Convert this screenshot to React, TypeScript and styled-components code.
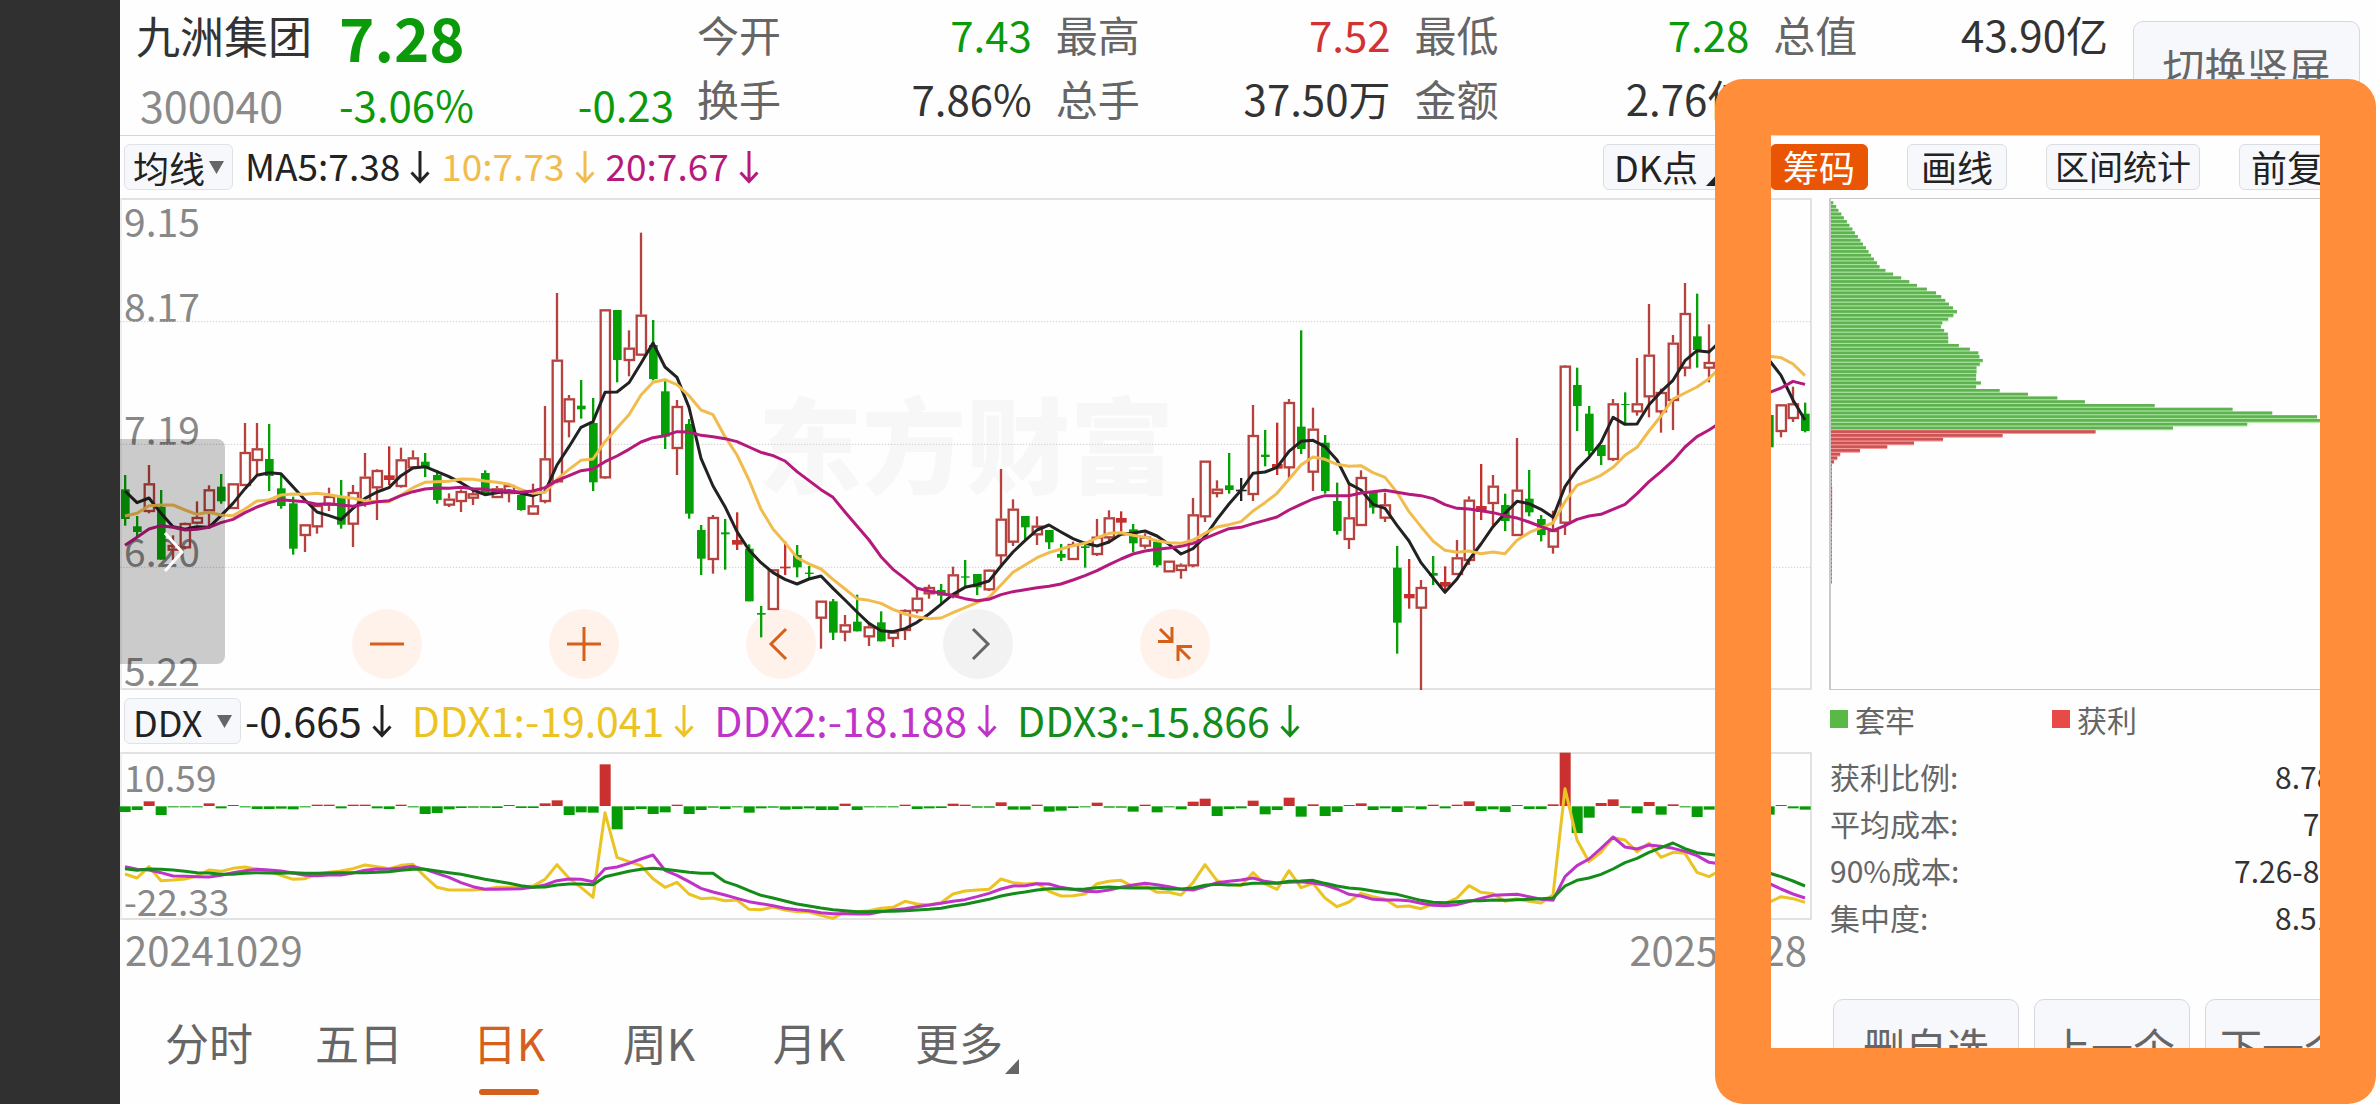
import React from 'react';
import styled, { createGlobalStyle } from 'styled-components';

const GlobalStyle = createGlobalStyle`
  *, *::before, *::after { box-sizing: border-box; }
  body {
    margin: 0;
    background: #fefefe;
    font-family: "Noto Sans CJK SC", "Noto Sans", sans-serif;
    color: #333;
  }
  button, select {
    font-family: inherit;
    color: inherit;
    margin: 0;
    padding: 0;
    border: 0;
    background: none;
    cursor: pointer;
  }
  dl, dd, dt, h1, p { margin: 0; font-weight: 400; }
`;

const GREEN = '#0a9a0a';
const RED = '#d23232';
const INK = '#222';
const GOLD = '#f1bc4e';
const PLUM = '#b5197c';
const DDX_GOLD = '#ebc323';
const DDX_PURPLE = '#bf33c8';
const DDX_GREEN = '#148c1a';
const ORANGE = '#d4601c';

/* ---------- data ---------- */

type Kind = 'g' | 'r' | 'R' | 'k';
type Candle = [Kind, number, number, number, number];

// kind, high, low, body top, body bottom
const candles: Candle[] = [
  ['g', 855, 1007, 898, 987], ['g', 978, 1040, 1009, 1026], ['r', 825, 970, 880, 964], ['g', 900, 1109, 950, 1109],
  ['r', 1036, 1110, 1065, 1080], ['r', 998, 1078, 999, 1073], ['r', 934, 1003, 981, 999], ['r', 886, 1010, 898, 962],
  ['g', 852, 941, 890, 934], ['r', 880, 955, 880, 955], ['r', 699, 888, 786, 886], ['r', 699, 853, 775, 811],
  ['g', 702, 903, 807, 858], ['g', 855, 956, 895, 948], ['g', 920, 1094, 940, 1076], ['r', 1003, 1086, 1003, 1036],
  ['r', 940, 1031, 945, 1010], ['r', 893, 963, 918, 945], ['g', 870, 1016, 918, 1004], ['r', 885, 1071, 906, 1002],
  ['r', 789, 950, 860, 940], ['r', 838, 990, 840, 893], ['R', 769, 885, 856, 870], ['r', 773, 893, 808, 889],
  ['r', 781, 833, 802, 833], ['g', 789, 861, 815, 832], ['g', 841, 941, 855, 930], ['r', 910, 951, 926, 945],
  ['r', 898, 966, 903, 934], ['r', 902, 945, 910, 924], ['g', 841, 913, 849, 910], ['r', 888, 924, 895, 922],
  ['r', 880, 937, 885, 910], ['g', 912, 962, 915, 960], ['r', 881, 974, 946, 972], ['r', 648, 940, 805, 934],
  ['r', 309, 880, 509, 875], ['r', 615, 742, 625, 695], ['g', 570, 686, 647, 658], ['g', 624, 903, 699, 877],
  ['r', 358, 866, 358, 863], ['g', 360, 577, 360, 510], ['r', 421, 559, 473, 511], ['r', 128, 497, 374, 495],
  ['g', 390, 571, 465, 567], ['g', 570, 777, 604, 740], ['r', 630, 855, 648, 775], ['g', 687, 986, 702, 971],
  ['g', 1005, 1155, 1020, 1106], ['r', 975, 1151, 981, 1108], ['g', 987, 1139, 1027, 1033], ['R', 967, 1080, 1050, 1064],
  ['g', 1063, 1234, 1076, 1234], ['g', 1248, 1342, 1269, 1274], ['r', 1138, 1258, 1138, 1258], ['R', 1054, 1155, 1130, 1135],
  ['g', 1065, 1162, 1095, 1132], ['g', 1128, 1165, 1148, 1152], ['r', 1232, 1376, 1232, 1284], ['g', 1227, 1350, 1234, 1328],
  ['r', 1275, 1354, 1303, 1326], ['g', 1214, 1324, 1295, 1324], ['r', 1300, 1368, 1309, 1340], ['g', 1264, 1354, 1297, 1354],
  ['r', 1320, 1371, 1325, 1345], ['r', 1258, 1350, 1260, 1321], ['r', 1196, 1270, 1223, 1262], ['r', 1184, 1226, 1191, 1211],
  ['g', 1182, 1240, 1200, 1217], ['r', 1130, 1225, 1153, 1215], ['g', 1110, 1190, 1159, 1163], ['g', 1152, 1215, 1152, 1192],
  ['r', 1138, 1203, 1139, 1199], ['r', 837, 1130, 986, 1097], ['r', 928, 1068, 956, 1056], ['g', 978, 1048, 978, 1012],
  ['r', 979, 1065, 1007, 1034], ['g', 1020, 1077, 1020, 1057], ['g', 1062, 1113, 1092, 1103], ['r', 1055, 1110, 1062, 1108],
  ['g', 1055, 1133, 1069, 1074], ['r', 987, 1098, 1040, 1093], ['r', 961, 1060, 982, 1043], ['R', 964, 1025, 984, 998],
  ['g', 1002, 1087, 1018, 1060], ['r', 1030, 1076, 1040, 1068], ['g', 1050, 1132, 1055, 1126], ['r', 1112, 1145, 1112, 1145],
  ['r', 1120, 1166, 1124, 1141], ['r', 924, 1132, 973, 1127], ['r', 812, 996, 812, 980], ['r', 871, 922, 896, 910],
  ['g', 789, 911, 886, 900], ['k', 864, 933, 899, 904], ['r', 645, 933, 735, 913], ['g', 720, 829, 794, 801],
  ['R', 698, 855, 822, 836], ['r', 627, 869, 636, 833], ['g', 421, 792, 710, 777], ['r', 653, 903, 716, 846],
  ['g', 735, 911, 758, 903], ['g', 878, 1034, 933, 1023], ['r', 880, 1077, 982, 1048], ['r', 841, 1006, 861, 1006],
  ['g', 905, 971, 905, 953], ['r', 908, 996, 943, 984], ['g', 1068, 1391, 1133, 1298], ['R', 1107, 1256, 1212, 1225],
  ['r', 1170, 1500, 1191, 1254], ['g', 1098, 1185, 1149, 1157], ['R', 1129, 1205, 1176, 1190], ['r', 1050, 1154, 1102, 1153],
  ['r', 919, 1125, 929, 1111], ['R', 822, 990, 948, 966], ['r', 855, 1006, 887, 940], ['g', 911, 1023, 945, 993],
  ['r', 744, 1037, 899, 1036], ['g', 840, 979, 926, 967], ['g', 975, 1054, 987, 1035], ['r', 962, 1091, 1020, 1071],
  ['r', 525, 1035, 527, 999], ['g', 533, 723, 585, 648], ['g', 648, 797, 671, 783], ['g', 765, 825, 765, 798],
  ['r', 627, 813, 640, 808], ['g', 607, 703, 642, 645], ['r', 504, 677, 640, 665], ['r', 342, 682, 494, 620],
  ['r', 596, 728, 606, 665], ['r', 435, 720, 458, 631], ['r', 279, 559, 369, 534], ['g', 311, 533, 439, 480],
  ['r', 403, 577, 516, 534], ['r', 380, 560, 420, 520], ['g', 400, 590, 450, 560], ['r', 420, 620, 470, 570],
  ['g', 520, 700, 560, 660], ['g', 640, 780, 675, 772], ['r', 643, 742, 643, 724], ['r', 590, 696, 640, 685],
  ['g', 638, 727, 671, 723],
];

const ma5 = [
  903, 938, 924, 970, 1010, 1018, 1010, 1012, 977, 940, 896, 856, 848, 851, 890, 930, 966, 977, 989, 955,
  925, 906, 893, 857, 834, 830, 845, 860, 878, 900, 914, 908, 902, 910, 917, 905, 825, 770, 712, 695,
  607, 606, 578, 520, 459, 531, 562, 652, 805, 888, 950, 1025, 1080, 1118, 1148, 1168, 1182, 1167, 1158, 1195,
  1230, 1266, 1300, 1322, 1325, 1316, 1297, 1272, 1243, 1213, 1192, 1184, 1173, 1128, 1086, 1052, 1020, 1005, 1026, 1046,
  1060, 1068, 1056, 1033, 1029, 1023, 1038, 1063, 1092, 1076, 1040, 988, 942, 901, 850, 846, 832, 784, 754, 751,
  770, 810, 881, 900, 943, 955, 1006, 1053, 1118, 1163, 1207, 1167, 1110, 1062, 1010, 970, 934, 941, 958, 982,
  890, 838, 802, 757, 682, 703, 702, 644, 605, 571, 512, 482, 486, 452, 450, 455, 480, 510, 556, 630, 690,
];

const ma10 = [
  978, 970, 947, 945, 945, 960, 973, 967, 975, 977, 957, 933, 930, 915, 912, 913, 910, 914, 920, 925,
  932, 935, 935, 915, 893, 877, 875, 874, 867, 868, 873, 877, 883, 898, 910, 907, 868, 838, 811, 807,
  755, 714, 674, 615, 577, 569, 584, 617, 660, 674, 740, 795, 870, 958, 1017, 1058, 1103, 1122, 1137, 1168,
  1197, 1226, 1231, 1240, 1258, 1272, 1280, 1286, 1284, 1268, 1253, 1238, 1222, 1185, 1147, 1125, 1103, 1088, 1077, 1067,
  1060, 1044, 1030, 1028, 1036, 1042, 1052, 1058, 1060, 1050, 1030, 1011, 1004, 995, 963, 938, 910, 868, 825, 801,
  808, 823, 829, 827, 848, 862, 907, 965, 1010, 1053, 1081, 1087, 1083, 1091, 1086, 1091, 1051, 1028, 1013, 999,
  935, 886, 872, 856, 832, 796, 772, 723, 678, 627, 609, 591, 566, 530, 515, 507, 500, 499, 503, 522, 557,
];

const ma20 = [
  1066, 1042, 1017, 1007, 1012, 1020, 1018, 1012, 998, 988, 968, 951, 938, 929, 932, 935, 943, 941, 945, 949,
  942, 935, 932, 917, 905, 897, 894, 895, 892, 896, 898, 904, 903, 907, 903, 893, 872, 857, 842, 837,
  815, 798, 778, 756, 743, 737, 725, 726, 736, 740, 746, 755, 771, 787, 797, 813, 845, 872, 899, 922,
  966, 1008, 1050, 1100, 1138, 1166, 1195, 1203, 1210, 1217, 1226, 1232, 1228, 1214, 1205, 1199, 1193, 1189, 1182, 1170,
  1157, 1142, 1124, 1107, 1092, 1083, 1078, 1074, 1069, 1060, 1045, 1030, 1016, 1012, 1001, 991, 981, 960, 943, 927,
  917, 917, 917, 909, 905, 901, 907, 913, 917, 926, 944, 955, 957, 962, 968, 977, 984, 996, 1010, 1022,
  1007, 988, 978, 973, 958, 943, 911, 875, 845, 812, 771, 740, 720, 697, 670, 650, 630, 608, 594, 574, 583,
];

const ddxBars = [
  -17, -11, 14, -26, -3, -3, -3, 8, -6, 3, -3, -8, -8, -7, -9, -3, 4, 4, -6, 4,
  4, -6, -8, 4, -3, -23, -20, -9, -5, -4, -4, -5, 3, -5, -5, 8, 17, -26, -18, -19,
  125, -69, -11, -8, -23, -18, 4, -23, -11, -4, -8, -3, -19, -6, -4, -10, -8, -6, -11, -11,
  7, -11, -3, -3, -3, 4, -8, -6, -5, 7, 4, -4, -4, 11, -10, -10, 4, -16, -13, -5,
  -3, 10, -4, -4, -16, 4, -18, -3, -9, 13, 22, -29, -8, -6, 16, -24, -11, 25, -31, 5,
  -29, -17, 3, 8, -11, -6, -17, -4, -9, 4, -6, 4, 14, -14, -9, -17, 3, -8, -8, 5,
  160, -80, -34, 9, 20, -4, -21, 12, -25, 5, -3, -32, -10, -8, 6, -12, -9, -25, 3, -6, -10,
];

const ddx1 = [
  552, 564, 530, 572, 570, 567, 558, 540, 544, 535, 531, 538, 543, 556, 568, 566, 553, 547, 543, 536,
  525, 530, 536, 526, 523, 560, 592, 600, 600, 600, 598, 592, 592, 592, 588, 568, 524, 565, 592, 622,
  368, 502, 515, 527, 566, 592, 577, 612, 626, 624, 632, 630, 658, 659, 651, 660, 665, 666, 676, 685,
  665, 665, 662, 655, 652, 634, 642, 645, 638, 612, 603, 600, 598, 567, 578, 582, 580, 604, 618, 617,
  612, 581, 574, 571, 590, 586, 607, 607, 615, 578, 524, 572, 583, 587, 548, 582, 598, 542, 593, 580,
  624, 650, 636, 610, 620, 628, 650, 648, 656, 642, 640, 624, 587, 607, 611, 634, 626, 634, 639, 615,
  296, 450, 515, 487, 443, 450, 485, 460, 502, 487, 490, 547, 560, 540, 560, 560, 600, 637, 620, 626, 637,
];

const ddx2 = [
  530, 538, 540, 548, 558, 559, 560, 561, 556, 548, 542, 538, 540, 543, 549, 556, 557, 555, 555, 549,
  541, 537, 538, 534, 529, 538, 550, 562, 578, 590, 598, 598, 597, 596, 592, 585, 572, 567, 568, 575,
  536, 531, 520, 507, 495, 541, 556, 575, 595, 606, 615, 625, 635, 641, 647, 655, 659, 662, 668, 671,
  671, 672, 672, 665, 660, 656, 650, 645, 640, 634, 629, 620, 610, 597, 588, 587, 581, 582, 592, 598,
  604, 605, 600, 592, 585, 580, 584, 590, 598, 600, 590, 578, 574, 570, 564, 574, 579, 577, 575, 579,
  585, 597, 613, 618, 628, 630, 630, 632, 640, 646, 647, 644, 635, 625, 616, 614, 613, 620, 628, 631,
  560, 527, 507, 475, 441, 471, 477, 465, 469, 475, 484, 497, 517, 522, 535, 550, 565, 580, 597, 612, 624,
];

const ddx3 = [
  536, 541, 537, 538, 540, 544, 548, 549, 553, 553, 550, 548, 549, 550, 548, 550, 550, 549, 548, 548,
  548, 547, 545, 541, 538, 538, 543, 548, 553, 560, 568, 574, 580, 587, 592, 591, 585, 582, 582, 584,
  560, 552, 544, 538, 535, 538, 542, 547, 550, 550, 575, 587, 602, 616, 624, 633, 642, 648, 654, 659,
  662, 665, 665, 664, 664, 662, 660, 658, 655, 648, 643, 635, 628, 618, 611, 606, 600, 596, 596, 598,
  597, 593, 591, 593, 594, 594, 594, 597, 597, 594, 586, 583, 585, 584, 580, 580, 580, 574, 573, 571,
  580, 588, 594, 597, 603, 608, 613, 622, 631, 637, 638, 635, 632, 632, 630, 631, 629, 628, 626, 624,
  588, 571, 564, 553, 537, 518, 505, 487, 473, 459, 476, 488, 493, 498, 508, 520, 535, 549, 560, 573, 588,
];

const trapped = [
  9, 17, 23, 31, 38, 46, 53, 61, 68, 76, 83, 90, 98, 105, 112, 120, 128, 135, 151, 172, 194, 216, 237, 264, 289,
  303, 314, 324, 335, 346, 336, 322, 306, 302, 311, 321, 322, 322, 351, 381, 404, 407, 416, 408, 399, 399, 398, 398,
  411, 398, 462, 539, 619, 694, 884, 1096, 1204, 1326, 1400, 1136, 934,
];
const profit = [
  723, 470, 308, 229, 156, 82, 28, 20, 11, 4, 4, 4, 4, 4, 5, 6, 6, 6, 6, 6, 6, 6, 6, 6, 5, 5, 5, 4,
  3, 3, 2, 2, 2, 2, 2, 2, 2, 2, 2, 2, 2,
];

const colX = (i: number) => 75 + 36 * i;
const toPoints = (values: number[]) => values.map((v, i) => `${colX(i)},${v}`).join(' ');

/* ---------- shell ---------- */

const Page = styled.div`
  display: flex;
  position: relative;
  min-height: 100vh;
  overflow: hidden;
`;

const SideStrip = styled.div`
  flex: 0 0 120px;
  background: #303030;
`;

const Main = styled.main`
  flex: 1;
  min-width: 0;
  display: flex;
  flex-direction: column;
`;

const HighlightFrame = styled.div`
  position: absolute;
  top: 79px;
  right: 0;
  bottom: 0;
  width: 661px;
  border: 56px solid #ff8d3a;
  border-radius: 28px;
  pointer-events: none;
`;

/* ---------- header ---------- */

const Header = styled.header`
  display: flex;
  height: 136px;
  padding: 0 16px;
  border-bottom: 1px solid #d3d8d9;
`;

const Quote = styled.div`
  flex: 0 0 538px;
  display: grid;
  grid-template-columns: 176px 1fr;
  grid-template-rows: 72px 64px;
  column-gap: 27px;
  align-items: center;
  margin-right: 23px;
  white-space: nowrap;
`;

const StockName = styled.h1`
  padding-bottom: 2px;
  font-size: 44px;
  line-height: 64px;
`;

const StockCode = styled.span`
  padding-left: 4px;
  font-size: 43px;
  line-height: 64px;
  color: #8a8a8a;
`;

const LastPrice = styled.strong`
  font-size: 60px;
  line-height: 70px;
  font-weight: 700;
  color: ${GREEN};
`;

const ChangeLine = styled.div`
  display: flex;
  justify-content: space-between;
  font-size: 42px;
  line-height: 62px;
  color: ${GREEN};
`;

const StatGrid = styled.dl`
  flex: 1;
  display: grid;
  grid-template-columns: repeat(4, 1fr);
  grid-auto-rows: 64px;
  column-gap: 24px;
  padding-top: 2px;
`;

const Stat = styled.div`
  display: flex;
  justify-content: space-between;
  font-size: 42px;
  line-height: 64px;
  white-space: nowrap;
`;

const StatLabel = styled.dt`
  color: #666;
`;

const StatValue = styled.dd<{ $color?: string }>`
  color: ${(p) => p.$color ?? '#333'};
`;

const BoxButton = styled.button<{ $width: number }>`
  flex: 0 0 ${(p) => p.$width}px;
  height: 94px;
  border: 1px solid #d5d9dd;
  border-radius: 10px;
  background: #f7f8fb;
  color: #666;
  font-size: 42px;
  line-height: 60px;
`;

const OrientationButton = styled(BoxButton)`
  margin: 21px 0 0 25px;
  padding-bottom: 4px;
`;

/* ---------- indicator rows ---------- */

const ToolRow = styled.div`
  display: flex;
  align-items: center;
  height: 62px;
  padding: 0 5px 0 4px;
  white-space: nowrap;
`;

const SelectBox = styled.label`
  display: flex;
  align-items: center;
  height: 46px;
  padding: 0 8px;
  border: 1px solid #dfe2e6;
  border-radius: 6px;
  background: #f7f8fb;
  color: ${INK};
`;

const Picker = styled.select<{ $gap: number }>`
  appearance: none;
  font-size: 36px;
  line-height: 44px;
  height: 44px;
  padding-bottom: 2px;
  margin-right: ${(p) => p.$gap}px;
`;

const LegendList = styled.div<{ $size: number; $gap: number; $lead: number }>`
  display: flex;
  align-items: center;
  gap: ${(p) => p.$gap}px;
  margin-left: ${(p) => p.$lead}px;
  padding-bottom: 4px;
  font-size: ${(p) => p.$size}px;
  line-height: 56px;
`;

const LegendItem = styled.span<{ $color: string }>`
  display: flex;
  align-items: center;
  gap: 10px;
  color: ${(p) => p.$color};

  svg { margin-top: 4px; }
`;

const ToolButtons = styled.div`
  display: flex;
  gap: 39px;
  margin-left: auto;
`;

const ToolButton = styled.button<{ $width: number; $active?: boolean; $small?: boolean }>`
  display: flex;
  align-items: center;
  justify-content: center;
  gap: 8px;
  width: ${(p) => p.$width}px;
  height: 46px;
  padding-bottom: 3px;
  border: 1px solid ${(p) => (p.$active ? '#ea5504' : '#dadde1')};
  border-radius: 6px;
  background: ${(p) => (p.$active ? '#ea5504' : '#f7f8fb')};
  color: ${(p) => (p.$active ? '#fff' : INK)};
  font-size: ${(p) => (p.$small ? 34 : 36)}px;
  line-height: 44px;

  svg { align-self: flex-end; }
`;

/* ---------- body ---------- */

const Body = styled.div`
  display: flex;
  flex: 1;
  gap: 17px;
  padding-right: 15px;
`;

const ChartColumn = styled.section`
  flex: 1;
  min-width: 0;
`;

const ChipColumn = styled.aside`
  flex: 0 0 532px;
`;

const Plot = styled.div<{ $height: number }>`
  position: relative;
  height: ${(p) => p.$height}px;
  border: 2px solid #e2e2e2;
  border-left-color: #eee;
`;

const PlotSvg = styled.svg`
  display: block;
  position: relative;
  width: 100%;
  height: 100%;
  overflow: visible;
`;

const AxisLabel = styled.span<{ $top: number; $size: number }>`
  position: absolute;
  left: 2px;
  top: ${(p) => p.$top}px;
  font-size: ${(p) => p.$size}px;
  line-height: 40px;
  color: #888;
`;

const Watermark = styled.span`
  position: absolute;
  inset: 0;
  display: flex;
  align-items: center;
  justify-content: center;
  padding-bottom: 8px;
  font-size: 104px;
  font-weight: 900;
  color: #f7f7f7;
`;

const DrawerHandle = styled.button`
  position: absolute;
  left: -2px;
  top: 239px;
  width: 105px;
  height: 225px;
  padding-left: 43px;
  display: flex;
  align-items: center;
  border-radius: 0 8px 8px 0;
  background: rgba(0, 0, 0, 0.2);
`;

const ChartControls = styled.div`
  position: absolute;
  left: 230px;
  bottom: 9px;
  display: flex;
  gap: 127px;
`;

const RoundButton = styled.button<{ $muted?: boolean }>`
  display: flex;
  align-items: center;
  justify-content: center;
  width: 70px;
  height: 70px;
  border-radius: 50%;
  background: ${(p) => (p.$muted ? '#f2f2f2' : '#fff2eb')};
  color: ${(p) => (p.$muted ? '#666' : ORANGE)};
`;

const DateRow = styled.div`
  display: flex;
  justify-content: space-between;
  padding: 0 5px;
  font-size: 40px;
  line-height: 58px;
  color: #888;
`;

const Tabs = styled.nav`
  display: flex;
  padding: 32px 0 9px 14px;
`;

const Tab = styled.button<{ $active?: boolean }>`
  display: flex;
  flex-direction: column;
  align-items: center;
  gap: 15px;
  width: 150px;
  font-size: 44px;
  line-height: 64px;
  color: ${(p) => (p.$active ? ORANGE : '#666')};

  &::after {
    content: '';
    width: 60px;
    height: 6px;
    border-radius: 3px;
    background: ${(p) => (p.$active ? ORANGE : 'transparent')};
  }
`;

const TabText = styled.span`
  position: relative;
`;

const Corner = styled.svg`
  position: absolute;
  left: 100%;
  bottom: 0;
  margin-left: 2px;
`;

/* ---------- chip distribution ---------- */

const ChipPlot = styled.div`
  height: 492px;
  border: 1px solid #c9c9c9;
  border-left-width: 2px;
`;

const ChipLegend = styled.div`
  display: grid;
  grid-template-columns: 222px 1fr;
  height: 63px;
  padding-left: 1px;
`;

const ChipKey = styled.span<{ $color: string }>`
  display: flex;
  align-items: center;
  gap: 7px;
  height: 58px;
  font-size: 30px;
  color: #666;

  &::before {
    content: '';
    width: 18px;
    height: 18px;
    background: ${(p) => p.$color};
  }
`;

const ChipStats = styled.dl`
  padding-left: 1px;
`;

const ChipStat = styled.div`
  display: flex;
  justify-content: space-between;
  font-size: 30px;
  line-height: 47px;
`;

const ChipActions = styled.div`
  display: flex;
  gap: 15px;
  margin-top: 58px;
  padding-left: 4px;
`;

/* ---------- small drawings ---------- */

const DownArrow = () => (
  <svg width="20" height="34" viewBox="0 0 20 34" fill="none" stroke="currentColor" strokeWidth="3" aria-hidden="true">
    <path d="M10 1V31M1.500 22.500L10 31.500L18.500 22.500" />
  </svg>
);

const Caret = () => (
  <svg width="15" height="13" viewBox="0 0 15 13" aria-hidden="true">
    <path d="M0 0H15L7.500 13Z" fill="#666" />
  </svg>
);

const Wedge = ({ color }: { color: string }) => (
  <svg width="14" height="15" viewBox="0 0 14 15" aria-hidden="true">
    <path d="M14 0V15H0Z" fill={color} />
  </svg>
);

const Glyph = ({ d, label }: { d: string; label: string }) => (
  <svg width="34" height="34" viewBox="0 0 34 34" fill="none" stroke="currentColor" strokeWidth="3" role="img" aria-label={label}>
    <path d={d} />
  </svg>
);

const kindColor: Record<Kind, string> = { g: '#05a005', r: '#b5423e', R: '#c4302e', k: '#222' };

function CandleMark({ candle, x }: { candle: Candle; x: number }) {
  const [kind, high, low, top, bottom] = candle;
  const color = kindColor[kind];
  if (kind === 'r') {
    return (
      <g stroke={color} strokeWidth={7} fill="none">
        {high < top && <path d={`M${x} ${high}V${top}`} />}
        {low > bottom && <path d={`M${x} ${bottom}V${low}`} />}
        <rect x={x - 13} y={top + 3} width={28} height={Math.max(bottom - top - 4, 6)} />
      </g>
    );
  }
  const half = kind === 'g' ? 13 : 16;
  return (
    <g fill={color}>
      <rect x={x - 3} y={high} width={7} height={low - high} />
      <rect x={x - half + 1} y={top} width={half * 2} height={bottom - top} />
    </g>
  );
}

function Line({ values, color, width = 9 }: { values: number[]; color: string; width?: number }) {
  return <polyline points={toPoints(values)} fill="none" stroke={color} strokeWidth={width} strokeLinejoin="round" />;
}

function PriceChart() {
  return (
    <PlotSvg viewBox="66 30 5064 1464" preserveAspectRatio="none" role="img" aria-label="日K线">
      {[395, 763, 1132].map((y) => (
        <path key={y} d={`M60 ${y}H5134`} stroke="#cfcfcf" strokeWidth={3} strokeDasharray="4 5" />
      ))}
      {candles.map((c, i) => (
        <CandleMark key={i} candle={c} x={colX(i)} />
      ))}
      <Line values={ma5} color={INK} />
      <Line values={ma10} color={GOLD} />
      <Line values={ma20} color={PLUM} />
    </PlotSvg>
  );
}

function DdxChart() {
  return (
    <PlotSvg viewBox="66 192 5064 492" preserveAspectRatio="none" role="img" aria-label="DDX">
      {ddxBars.map((v, i) => (
        <rect
          key={i}
          x={colX(i) - 16}
          y={v > 0 ? 348 - v : 349}
          width={33}
          height={Math.abs(v)}
          fill={v > 0 ? '#cb3030' : '#069a06'}
        />
      ))}
      <Line values={ddx1} color={DDX_GOLD} />
      <Line values={ddx2} color={DDX_PURPLE} />
      <Line values={ddx3} color={DDX_GREEN} />
    </PlotSvg>
  );
}

function ChipChart() {
  const pitch = 11.26;
  const rows = [
    ...trapped.map((w) => ({ w, dark: '#60b151', light: '#a5e89a' })),
    ...profit.map((w) => ({ w, dark: '#cc5353', light: '#f79a98' })),
  ];
  return (
    <svg width="100%" height="100%" viewBox="84 57 1440 1470" preserveAspectRatio="none" display="block" role="img" aria-label="筹码分布">
      {rows.map(({ w, dark, light }, i) => {
        const y = 64 + i * pitch;
        return (
          <g key={i}>
            <rect x={84} y={y} width={Math.max(w - 3, 2)} height={pitch} fill={light} />
            <rect x={84} y={y} width={Math.max(w - 3, 2)} height={8} fill={dark} />
          </g>
        );
      })}
    </svg>
  );
}

/* ---------- page ---------- */

const stats: [string, string, string?][] = [
  ['今开', '7.43', GREEN],
  ['最高', '7.52', RED],
  ['最低', '7.28', GREEN],
  ['总值', '43.90亿'],
  ['换手', '7.86%'],
  ['总手', '37.50万'],
  ['金额', '2.76亿'],
];

const priceTicks: [string, number][] = [
  ['9.15', 0],
  ['8.17', 85],
  ['7.19', 208],
  ['6.20', 330],
  ['5.22', 449],
];

const chipStats = [
  ['获利比例:', '8.78%'],
  ['平均成本:', '7.91'],
  ['90%成本:', '7.26-8.61'],
  ['集中度:', '8.51%'],
];

export default function App() {
  return (
    <>
      <GlobalStyle />
      <Page>
        <SideStrip />
        <Main>
          <Header>
            <Quote>
              <StockName>九洲集团</StockName>
              <LastPrice>7.28</LastPrice>
              <StockCode>300040</StockCode>
              <ChangeLine>
                <span>-3.06%</span>
                <span>-0.23</span>
              </ChangeLine>
            </Quote>
            <StatGrid>
              {stats.map(([label, value, color]) => (
                <Stat key={label}>
                  <StatLabel>{label}</StatLabel>
                  <StatValue $color={color}>{value}</StatValue>
                </Stat>
              ))}
            </StatGrid>
            <OrientationButton $width={227}>切换竖屏</OrientationButton>
          </Header>

          <ToolRow>
            <SelectBox>
              <Picker $gap={3} aria-label="主图指标" defaultValue="均线">
                <option>均线</option>
              </Picker>
              <Caret />
            </SelectBox>
            <LegendList $size={37} $gap={11} $lead={12}>
              <LegendItem $color={INK}>MA5:7.38<DownArrow /></LegendItem>
              <LegendItem $color={GOLD}>10:7.73<DownArrow /></LegendItem>
              <LegendItem $color={PLUM}>20:7.67<DownArrow /></LegendItem>
            </LegendList>
            <ToolButtons>
              <ToolButton $width={128}>DK点<Wedge color={INK} /></ToolButton>
              <ToolButton $width={98} $active>筹码</ToolButton>
              <ToolButton $width={100}>画线</ToolButton>
              <ToolButton $width={154} $small>区间统计</ToolButton>
              <ToolButton $width={132}>前复权</ToolButton>
            </ToolButtons>
          </ToolRow>

          <Body>
            <ChartColumn>
              <Plot $height={492}>
                <Watermark>东方财富</Watermark>
                {priceTicks.map(([text, top]) => (
                  <AxisLabel key={text} $top={top} $size={39}>{text}</AxisLabel>
                ))}
                <ChartControls>
                  <RoundButton><Glyph label="缩小" d="M0 17H34" /></RoundButton>
                  <RoundButton><Glyph label="放大" d="M0 17H34M17 0V34" /></RoundButton>
                  <RoundButton><Glyph label="向左" d="M22 2L7 17L22 32" /></RoundButton>
                  <RoundButton $muted><Glyph label="向右" d="M12 2L27 17L12 32" /></RoundButton>
                  <RoundButton><Glyph label="收起" d="M2 2L14 14M0 14.500H15.500M14 0V14.500M32 32L20 20M34 19.500H18.500M20 34V19.500" /></RoundButton>
                </ChartControls>
                <PriceChart />
                <DrawerHandle aria-label="展开">
                  <svg width="22" height="42" viewBox="0 0 22 42" fill="none" stroke="#fff" strokeWidth="3" aria-hidden="true">
                    <path d="M2 2L19 21L2 40" />
                  </svg>
                </DrawerHandle>
              </Plot>

              <ToolRow>
                <SelectBox>
                  <Picker $gap={14} aria-label="副图指标" defaultValue="DDX">
                    <option>DDX</option>
                  </Picker>
                  <Caret />
                </SelectBox>
                <LegendList $size={41} $gap={20} $lead={4}>
                  <LegendItem $color={INK}>-0.665<DownArrow /></LegendItem>
                  <LegendItem $color={DDX_GOLD}>DDX1:-19.041<DownArrow /></LegendItem>
                  <LegendItem $color={DDX_PURPLE}>DDX2:-18.188<DownArrow /></LegendItem>
                  <LegendItem $color={DDX_GREEN}>DDX3:-15.866<DownArrow /></LegendItem>
                </LegendList>
              </ToolRow>

              <Plot $height={168}>
                <AxisLabel $top={2} $size={37}>10.59</AxisLabel>
                <AxisLabel $top={126} $size={37}>-22.33</AxisLabel>
                <DdxChart />
              </Plot>

              <DateRow>
                <span>20241029</span>
                <span>20250528</span>
              </DateRow>

              <Tabs>
                <Tab><TabText>分时</TabText></Tab>
                <Tab><TabText>五日</TabText></Tab>
                <Tab $active><TabText>日K</TabText></Tab>
                <Tab><TabText>周K</TabText></Tab>
                <Tab><TabText>月K</TabText></Tab>
                <Tab>
                  <TabText>
                    更多
                    <Corner width="14" height="15" viewBox="0 0 14 15" aria-hidden="true">
                      <path d="M14 0V15H0Z" fill="#666" />
                    </Corner>
                  </TabText>
                </Tab>
              </Tabs>
            </ChartColumn>

            <ChipColumn>
              <ChipPlot><ChipChart /></ChipPlot>
              <ChipLegend>
                <ChipKey $color="#5ab946">套牢</ChipKey>
                <ChipKey $color="#e84a48">获利</ChipKey>
              </ChipLegend>
              <ChipStats>
                {chipStats.map(([label, value]) => (
                  <ChipStat key={label}>
                    <StatLabel>{label}</StatLabel>
                    <StatValue>{value}</StatValue>
                  </ChipStat>
                ))}
              </ChipStats>
              <ChipActions>
                <BoxButton $width={186}>删自选</BoxButton>
                <BoxButton $width={156}>上一个</BoxButton>
                <BoxButton $width={156}>下一个</BoxButton>
              </ChipActions>
            </ChipColumn>
          </Body>
        </Main>
        <HighlightFrame />
      </Page>
    </>
  );
}
